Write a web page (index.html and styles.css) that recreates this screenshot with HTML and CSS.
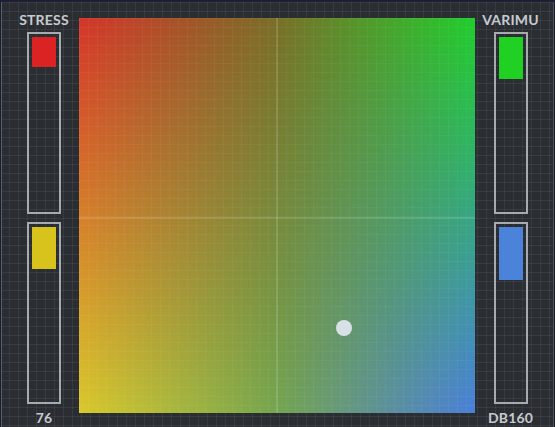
FILE: index.html
```html
<!DOCTYPE html>
<html>
<head>
<meta charset="utf-8">
<link rel="stylesheet" href="styles.css">
</head>
<body>
<div class="app">
  <div class="side side-left">
    <div class="label top-label">STRESS</div>
    <div class="meter"><div class="fill fill-red"></div></div>
    <div class="meter"><div class="fill fill-yellow"></div></div>
    <div class="label bottom-label">76</div>
  </div>
  <div class="pad">
    <div class="pad-bottom"></div>
    <div class="pad-grid"></div>
    <div class="axis axis-v"></div>
    <div class="axis axis-h"></div>
    <div class="puck"></div>
  </div>
  <div class="side side-right">
    <div class="label top-label">VARIMU</div>
    <div class="meter"><div class="fill fill-green"></div></div>
    <div class="meter"><div class="fill fill-blue"></div></div>
    <div class="label bottom-label">DB160</div>
  </div>
</div>
</body>
</html>
```
FILE: styles.css
```css
html, body {
  margin: 0;
  padding: 0;
  background: #2b2f34;
}
.app {
  width: 555px;
  height: 427px;
  box-sizing: border-box;
  border-top: 2px solid #1c1e33;
  display: flex;
  background-color: #2a2e33;
  background-image:
    linear-gradient(to right, rgba(255,255,255,0.06) 1px, transparent 1px),
    linear-gradient(to bottom, rgba(255,255,255,0.06) 1px, transparent 1px);
  background-size: 9px 9px;
  box-shadow: inset 1px 0 #1b1d26, inset 2px 0 #55616d, inset -1px 0 #1b1d26, inset -2px 0 #47525d;
  font-family: Lato, "Liberation Sans", sans-serif;
  overflow: hidden;
}
.side {
  display: flex;
  flex-direction: column;
  align-items: center;
  box-sizing: border-box;
}
.side-left {
  width: 79px;
  padding-left: 9px;
}
.side-right {
  width: 80px;
  padding-right: 9px;
}
.label {
  color: #c6cacf;
  font-weight: 700;
  font-size: 14px;
  line-height: 16px;
  height: 16px;
  letter-spacing: 0.2px;
}
.top-label {
  margin-top: 10px;
  margin-bottom: 4px;
}
.bottom-label {
  margin-top: 6px;
}
.meter {
  width: 34px;
  height: 182px;
  box-sizing: border-box;
  border: 2px solid #a6abb0;
  padding: 3px;
  margin-bottom: 8px;
}
.meter + .meter {
  margin-bottom: 0;
}
.fill {
  width: 24px;
}
.fill-red { height: 30px; background: #dc2323; }
.fill-yellow { height: 42px; background: #d8c21c; }
.fill-green { height: 42px; background: #20d022; }
.fill-blue { height: 53px; background: #4a83d9; }

.pad {
  position: relative;
  width: 396px;
  height: 395px;
  margin-top: 16px;
  background: linear-gradient(to right, #d5352a, #7a6f28 50%, #20cf2c);
  overflow: hidden;
}
.pad-bottom {
  position: absolute;
  inset: 0;
  background: linear-gradient(to right, #d9c92c, #74a550 50%, #4a7fda);
  -webkit-mask-image: linear-gradient(to bottom, transparent, #000);
  mask-image: linear-gradient(to bottom, transparent, #000);
}
.pad-grid {
  position: absolute;
  inset: 0;
  background-image:
    linear-gradient(to right, rgba(255,255,255,0.04) 1px, transparent 1px),
    linear-gradient(to bottom, rgba(255,255,255,0.04) 1px, transparent 1px);
  background-size: 9px 9px;
}
.axis {
  position: absolute;
  background: rgba(255,255,255,0.13);
}
.axis-v {
  left: 197px;
  top: 0;
  bottom: 0;
  width: 2px;
}
.axis-h {
  top: 199px;
  left: 0;
  right: 0;
  height: 2px;
}
.puck {
  position: absolute;
  left: 257px;
  top: 302px;
  width: 16px;
  height: 16px;
  border-radius: 50%;
  background: #d9e1e7;
}
```
